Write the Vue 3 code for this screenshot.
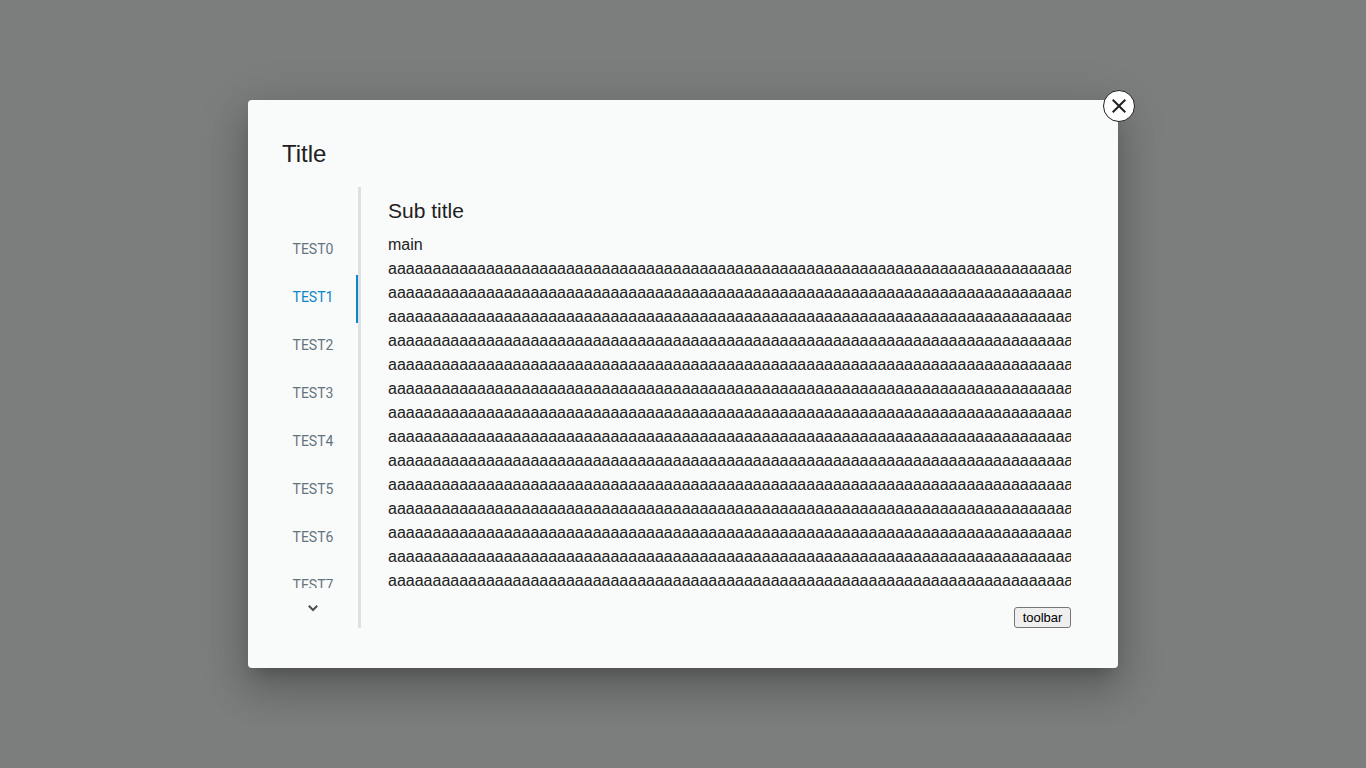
<script setup>
import { ref } from 'vue'

const tabs = Array.from({ length: 8 }, (_, i) => `TEST${i}`)
const active = ref(1)
const lines = Array.from({ length: 14 }, () => 'a'.repeat(120))
</script>

<template>
  <div class="overlay">
    <section class="dialog" role="dialog" aria-labelledby="dialog-title">
      <button class="close" type="button" aria-label="Close">
        <svg viewBox="0 0 24 24" width="24" height="24" aria-hidden="true">
          <path d="M19 6.41 17.59 5 12 10.59 6.41 5 5 6.41 10.59 12 5 17.59 6.41 19 12 13.41 17.59 19 19 17.59 13.41 12z" />
        </svg>
      </button>
      <h1 id="dialog-title" class="title">Title</h1>
      <div class="body">
        <nav class="side">
          <div class="tabs" role="tablist">
            <button
              v-for="(tab, i) in tabs"
              :key="tab"
              type="button"
              role="tab"
              class="tab"
              :class="{ active: i === active }"
              :aria-selected="i === active"
              @click="active = i"
            >{{ tab }}</button>
          </div>
          <button class="next" type="button" aria-label="Next tabs">
            <svg viewBox="0 0 20 20" width="20" height="20" aria-hidden="true">
              <path d="M5.8 7.8 10 12l4.2-4.2" />
            </svg>
          </button>
        </nav>
        <div class="content">
          <h2 class="subtitle">Sub title</h2>
          <div class="main">
            <div>main</div>
            <div v-for="(line, i) in lines" :key="i">{{ line }}</div>
          </div>
          <div class="toolbar">
            <button type="button" class="tool">toolbar</button>
          </div>
        </div>
      </div>
    </section>
  </div>
</template>

<style>
body {
  margin: 0;
}
</style>

<style scoped>
.overlay {
  min-height: 100vh;
  box-sizing: border-box;
  padding: 24px;
  display: flex;
  align-items: center;
  justify-content: center;
  background: #7c7e7d;
  color: #212121;
  font-family: "Liberation Sans", Arial, sans-serif;
  font-size: 16px;
  line-height: 24px;
}
.dialog {
  position: relative;
  box-sizing: border-box;
  width: 100%;
  max-width: 870px;
  padding: 38px 47px 40px 20px;
  border-radius: 4px;
  background: #f9fbfa;
  box-shadow:
    0 11px 15px -7px rgba(0, 0, 0, 0.2),
    0 24px 38px 3px rgba(0, 0, 0, 0.14),
    0 9px 46px 8px rgba(0, 0, 0, 0.12);
}
.close {
  position: absolute;
  top: -10px;
  right: -17px;
  box-sizing: border-box;
  width: 32px;
  height: 32px;
  padding: 0;
  display: flex;
  align-items: center;
  justify-content: center;
  border: 1px solid #212121;
  border-radius: 50%;
  background: #fff;
}
.close svg {
  fill: #212121;
}
.title {
  margin: 0 0 17px;
  padding-left: 14px;
  font-size: 24px;
  font-weight: 400;
  line-height: 32px;
}
.body {
  display: flex;
}
.side {
  box-sizing: border-box;
  flex: 0 0 93px;
  height: 441px;
  padding-top: 40px;
  display: flex;
  flex-direction: column;
  border-right: 3px solid #dfe0e4;
}
.tabs {
  flex: 1;
  min-height: 0;
  overflow: hidden;
}
.tab {
  display: block;
  box-sizing: border-box;
  width: 100%;
  height: 48px;
  padding: 0 0 4px;
  border: 0;
  background: linear-gradient(#0b86c6, #0b86c6) right / 0 100% no-repeat;
  color: #64747f;
  font-family: Roboto, sans-serif;
  font-size: 14px;
  font-weight: 400;
  line-height: 20px;
}
.tab.active {
  background-size: 2px 100%;
  color: #0b86c6;
}
.next {
  height: 40px;
  padding: 0;
  display: flex;
  align-items: center;
  justify-content: center;
  border: 0;
  background: none;
}
.next svg {
  fill: none;
  stroke: #4d4e4e;
  stroke-width: 2;
}
.content {
  flex: 1;
  min-width: 0;
  padding-left: 27px;
  display: flex;
  flex-direction: column;
}
.subtitle {
  margin: 8px 0 6px;
  font-size: 21px;
  font-weight: 400;
  line-height: 32px;
}
.main {
  overflow: hidden;
  white-space: nowrap;
}
.toolbar {
  margin-top: auto;
  display: flex;
  justify-content: flex-end;
}
.tool {
  box-sizing: border-box;
  min-width: 57px;
  height: 21px;
  padding: 0 7px;
  border: 1px solid #767676;
  border-radius: 3px;
  background: #efefef;
  color: #000;
  font-family: "Liberation Sans", Arial, sans-serif;
  font-size: 13px;
  line-height: 19px;
}
</style>
